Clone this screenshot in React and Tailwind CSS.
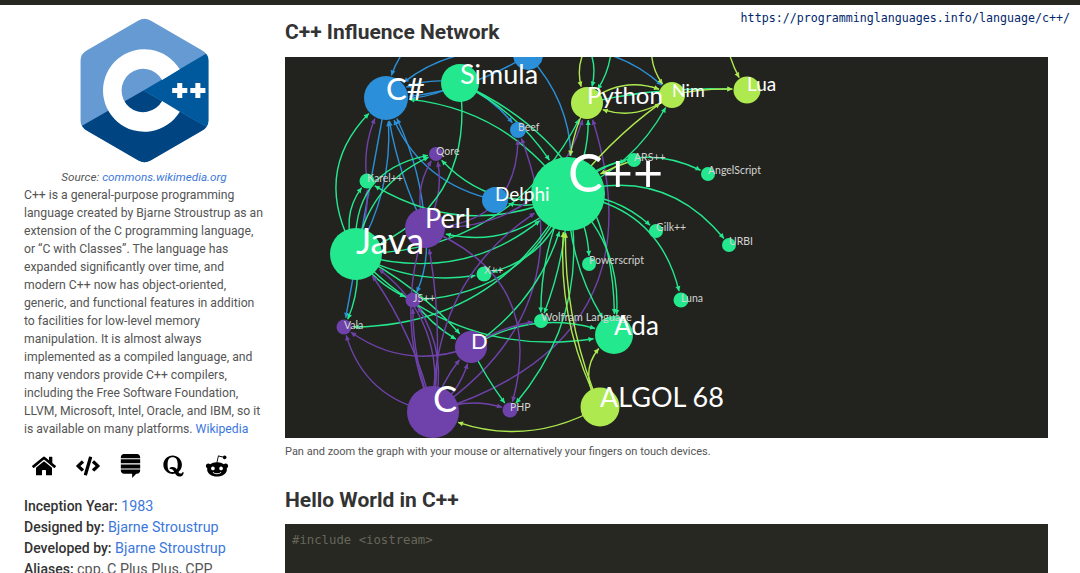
import { FaHome, FaCode, FaStackExchange, FaQuora, FaRedditAlien } from 'react-icons/fa';

const BLUE = '#2b90d9';
const GREEN = '#24e88e';
const PURPLE = '#6f42ab';
const LIME = '#aeea4f';

// graph nodes, page coordinates: x, y, radius, colour, label size
const nodes = {
  csharp: { x: 386, y: 98, r: 22, c: BLUE, label: 'C#', size: 31, ly: 100 },
  simula: { x: 460, y: 83, r: 19, c: GREEN, label: 'Simula', size: 27, ly: 84 },
  topBlue: { x: 528, y: 55, r: 15, c: BLUE },
  python: { x: 587, y: 103, r: 16, c: LIME, label: 'Python', size: 24, ly: 104 },
  nim: { x: 672, y: 95, r: 13, c: LIME, label: 'Nim', size: 18, ly: 97 },
  lua: { x: 747, y: 90, r: 13.5, c: LIME, label: 'Lua', size: 19, ly: 91 },
  beef: { x: 518, y: 130, r: 8, c: BLUE, label: 'Beef', size: 10.5, ly: 131, dim: true },
  qore: { x: 436, y: 154, r: 7, c: PURPLE, label: 'Qore', size: 10.5, ly: 155, dim: true },
  karel: { x: 367, y: 181, r: 7.5, c: GREEN, label: 'Karel++', size: 10.5, ly: 182, dim: true },
  cpp: { x: 568, y: 194, r: 37, c: GREEN, label: 'C++', size: 52, ly: 192 },
  ars: { x: 634, y: 160, r: 7, c: GREEN, label: 'ARS++', size: 10.5, ly: 161, dim: true },
  angel: { x: 708, y: 174, r: 7, c: GREEN, label: 'AngelScript', size: 10.5, ly: 174, dim: true },
  delphi: { x: 495, y: 200, r: 13, c: BLUE, label: 'Delphi', size: 19, ly: 201 },
  perl: { x: 425, y: 228, r: 20, c: PURPLE, label: 'Perl', size: 27, ly: 228 },
  gilk: { x: 656, y: 231, r: 7, c: GREEN, label: 'Gilk++', size: 10.5, ly: 231, dim: true },
  urbi: { x: 729, y: 245, r: 7, c: GREEN, label: 'URBI', size: 10.5, ly: 245, dim: true },
  java: { x: 356, y: 254, r: 26, c: GREEN, label: 'Java', size: 36, ly: 254 },
  xpp: { x: 484, y: 274, r: 7.5, c: GREEN, label: 'X++', size: 10.5, ly: 274, dim: true },
  power: { x: 589, y: 264, r: 7, c: GREEN, label: 'Powerscript', size: 10.5, ly: 264, dim: true },
  js: { x: 413, y: 300, r: 7.5, c: PURPLE, label: 'JS++', size: 10.5, ly: 302, dim: true },
  luna: { x: 681, y: 300, r: 7.5, c: GREEN, label: 'Luna', size: 10.5, ly: 302, dim: true },
  vala: { x: 344, y: 327, r: 7.5, c: PURPLE, label: 'Vala', size: 10.5, ly: 329, dim: true },
  wolfram: { x: 541, y: 321, r: 7, c: GREEN, label: 'Wolfram Language', size: 11, ly: 321, dim: true },
  ada: { x: 614, y: 335, r: 19, c: GREEN, label: 'Ada', size: 26, ly: 335 },
  d: { x: 471, y: 347, r: 16, c: PURPLE, label: 'D', size: 22, ly: 349 },
  php: { x: 510, y: 410, r: 7.5, c: PURPLE, label: 'PHP', size: 10.5, ly: 411, dim: true },
  c: { x: 433, y: 412, r: 26, c: PURPLE, label: 'C', size: 36, ly: 412 },
  algol: { x: 600, y: 407, r: 19.5, c: LIME, label: 'ALGOL 68', size: 27, ly: 407 },
  offA: { x: 440, y: 20, r: 1 },
  offB: { x: 545, y: 20, r: 1 },
  offC: { x: 610, y: 25, r: 1 },
  offD: { x: 660, y: 20, r: 1 },
  offE: { x: 725, y: 20, r: 1 },
};

// from, to, colour, bend in px
const edges = [
  ['topBlue', 'csharp', BLUE, -10], ['simula', 'csharp', BLUE, -6], ['simula', 'csharp', BLUE, 8],
  ['offA', 'csharp', BLUE, 12], ['topBlue', 'csharp', BLUE, 20], ['java', 'csharp', BLUE, 14],
  ['perl', 'csharp', BLUE, -6], ['perl', 'csharp', BLUE, 8], ['delphi', 'csharp', BLUE, -22],
  ['java', 'csharp', GREEN, -34], ['karel', 'csharp', PURPLE, -8], ['cpp', 'csharp', GREEN, 26],
  ['simula', 'beef', BLUE, -5], ['topBlue', 'cpp', BLUE, -18], ['topBlue', 'nim', BLUE, -22],
  ['perl', 'js', BLUE, -6], ['csharp', 'vala', BLUE, 0], ['java', 'karel', GREEN, -12],
  ['java', 'karel', PURPLE, 4], ['java', 'qore', GREEN, -18], ['java', 'qore', GREEN, -30],
  ['perl', 'qore', PURPLE, -10], ['perl', 'qore', PURPLE, 8], ['cpp', 'qore', GREEN, -22],
  ['cpp', 'karel', GREEN, -28], ['simula', 'java', GREEN, -40], ['cpp', 'perl', GREEN, -24],
  ['cpp', 'delphi', GREEN, -8], ['java', 'cpp', GREEN, 34],
  ['java', 'python', GREEN, 44], ['perl', 'python', PURPLE, 42], ['c', 'python', PURPLE, 90],
  ['c', 'beef', PURPLE, 60], ['simula', 'cpp', GREEN, -14], ['simula', 'ada', GREEN, -50],
  ['python', 'cpp', LIME, 6], ['cpp', 'python', GREEN, 8],
  ['cpp', 'nim', GREEN, 14], ['cpp', 'nim', LIME, -6],
  ['python', 'nim', LIME, -14], ['nim', 'python', LIME, -14], ['python', 'lua', GREEN, -6],
  ['nim', 'lua', LIME, -3], ['offC', 'python', LIME, 18], ['offC', 'python', GREEN, -10],
  ['offE', 'lua', LIME, 6], ['offD', 'nim', LIME, 14], ['offB', 'python', GREEN, -26],
  ['cpp', 'ars', GREEN, -8], ['cpp', 'angel', GREEN, -26], ['cpp', 'gilk', GREEN, -10],
  ['cpp', 'urbi', GREEN, -30], ['cpp', 'luna', GREEN, -28], ['cpp', 'power', GREEN, -6],
  ['cpp', 'ada', GREEN, -20], ['cpp', 'ada', GREEN, 12], ['cpp', 'wolfram', GREEN, -6],
  ['cpp', 'wolfram', GREEN, 8], ['ars', 'cpp', LIME, 3], ['cpp', 'xpp', GREEN, -18],
  ['java', 'xpp', GREEN, 12], ['java', 'js', GREEN, 6], ['java', 'd', GREEN, -8],
  ['java', 'ada', GREEN, 38], ['cpp', 'vala', GREEN, -40],
  ['cpp', 'js', GREEN, -30], ['js', 'd', GREEN, 5], ['d', 'cpp', GREEN, 20],
  ['d', 'php', GREEN, 2], ['cpp', 'php', GREEN, -28], ['d', 'ada', GREEN, -18],
  ['java', 'vala', GREEN, -6], ['algol', 'ada', LIME, -18], ['algol', 'cpp', LIME, -18],
  ['algol', 'cpp', LIME, -14], ['algol', 'c', LIME, -22], ['c', 'java', PURPLE, 30],
  ['c', 'js', PURPLE, -6], ['c', 'js', PURPLE, 14], ['c', 'vala', PURPLE, -20],
  ['c', 'd', PURPLE, -5], ['c', 'd', PURPLE, 8], ['c', 'php', PURPLE, -8],
  ['c', 'perl', PURPLE, 8], ['c', 'perl', PURPLE, -18], ['c', 'java', PURPLE, 10],
  ['d', 'vala', PURPLE, -18], ['d', 'wolfram', PURPLE, -5], ['perl', 'php', PURPLE, -46],
  ['c', 'cpp', PURPLE, -40], ['perl', 'beef', PURPLE, 34],
];

function Edge({ edge }) {
  const [from, to, color, bend] = edge;
  const a = nodes[from];
  const b = nodes[to];
  const dx = b.x - a.x;
  const dy = b.y - a.y;
  const len = Math.hypot(dx, dy);
  const cx = (a.x + b.x) / 2 - (dy / len) * bend * 2;
  const cy = (a.y + b.y) / 2 + (dx / len) * bend * 2;
  const at = (t) => ({
    x: (1 - t) * (1 - t) * a.x + 2 * t * (1 - t) * cx + t * t * b.x,
    y: (1 - t) * (1 - t) * a.y + 2 * t * (1 - t) * cy + t * t * b.y,
  });
  // walk back from the target until the curve leaves its circle
  let t = 1;
  while (t > 0 && Math.hypot(at(t).x - b.x, at(t).y - b.y) < b.r + 1) t -= 0.004;
  const end = at(t);
  const ex = (1 - t) * a.x + t * cx;
  const ey = (1 - t) * a.y + t * cy;
  const fx = (1 - t) * cx + t * b.x;
  const fy = (1 - t) * cy + t * b.y;
  const ang = (Math.atan2(fy - ey, fx - ex) * 180) / Math.PI;
  return (
    <g>
      <path d={`M${a.x} ${a.y}Q${ex} ${ey} ${end.x} ${end.y}`} fill="none" stroke={color} strokeWidth="1.4" />
      <polygon
        points="0,0 -5,-2.500 -5,2.500"
        fill={color}
        transform={`translate(${end.x} ${end.y}) rotate(${ang})`}
      />
    </g>
  );
}

function Graph() {
  return (
    <svg viewBox="285 57 763 381" className="block w-[763px] h-[381px] bg-[#22231e]">
      {edges.map((edge, i) => (
        <Edge key={i} edge={edge} />
      ))}
      {Object.entries(nodes)
        .filter(([, n]) => n.c)
        .map(([id, n]) => (
          <circle key={id} cx={n.x} cy={n.y} r={n.r} fill={n.c} />
        ))}
      {Object.entries(nodes)
        .filter(([, n]) => n.label)
        .map(([id, n]) => (
          <text
            key={id}
            x={n.x}
            y={n.ly}
            fontSize={n.size}
            fill={n.dim ? '#d4d4d4' : '#ffffff'}
            className="font-['Lato',sans-serif]"
          >
            {n.label}
          </text>
        ))}
    </svg>
  );
}

function CppLogo() {
  return (
    <svg viewBox="0 0 128 144" className="block w-[129px] h-[145px]">
      <path
        d="M58 2.500Q64 -1 70 2.500L121 32Q127.500 35.500 127.500 42L127.500 102Q127.500 108.500 121 112L70 141.500Q64 145 58 141.500L7 112Q0.500 108.500 0.500 102L0.500 42Q0.500 35.500 7 32Z"
        fill="#659ad2"
      />
      <path d="M2 107L63 72L125.500 108Q124 110.500 121 112L70 141.500Q64 145 58 141.500L7 112Q4 110.500 2 107Z" fill="#004482" />
      <path d="M63 72L125 35.500Q127.500 38 127.500 42L127.500 102Q127.500 105.500 125.500 108Z" fill="#00599c" />
      <path d="M99 51A41 41 0 1 0 99 93L81.500 82.500A21.500 21.500 0 1 1 81.500 61.500Z" fill="#ffffff" />
      <path d="M96.500 64.500h5v5h5v5h-5v5h-5v-5h-5v-5h5zM114.500 64.500h5v5h5v5h-5v5h-5v-5h-5v-5h5z" fill="#ffffff" />
    </svg>
  );
}

const Link = ({ children }) => <a className="text-[#3b78dc]">{children}</a>;

export default function App() {
  return (
    <div className="relative h-screen overflow-hidden bg-white font-['Roboto',sans-serif]">
      <div className="h-[5px] bg-[#272822]" />
      <div className="absolute top-[10px] right-[10px] font-['DejaVu_Sans_Mono',monospace] text-[11.65px] leading-[16px] text-[#00266b]">
        https://programminglanguages.info/language/c++/
      </div>

      <div className="flex">
        <aside className="w-[285px] shrink-0 pl-6 pr-[21px]">
          <div className="flex justify-center pt-[13px]">
            <CppLogo />
          </div>
          <p className="mt-[5px] text-center text-[11.7px] leading-[18px] italic text-[#555555]">
            Source: <Link>commons.wikimedia.org</Link>
          </p>
          <p className="text-[12.2px] leading-[18px] text-[#555555]">
            C++ is a general-purpose programming language created by Bjarne Stroustrup as an extension of the C
            programming language, or “C with Classes”. The language has expanded significantly over time, and modern
            C++ now has object-oriented, generic, and functional features in addition to facilities for low-level
            memory manipulation. It is almost always implemented as a compiled language, and many vendors provide C++
            compilers, including the Free Software Foundation, LLVM, Microsoft, Intel, Oracle, and IBM, so it is
            available on many platforms. <Link>Wikipedia</Link>
          </p>
          <div className="mt-[16px] flex items-center gap-5 pl-2 text-black">
            <FaHome className="w-[24px] h-[22px]" />
            <FaCode className="w-[24px] h-[20px]" />
            <FaStackExchange className="w-[21px] h-[24px]" />
            <FaQuora className="ml-[2px] w-[21px] h-[24px]" />
            <FaRedditAlien className="ml-[1px] w-[24px] h-[24px]" />
          </div>
          <div className="mt-[18px] text-[14.3px] leading-[21px] text-[#555555]">
            <p>
              <strong className="text-[14px] font-medium text-[#333333]">Inception Year:</strong> <Link>1983</Link>
            </p>
            <p>
              <strong className="text-[14px] font-medium text-[#333333]">Designed by:</strong> <Link>Bjarne Stroustrup</Link>
            </p>
            <p>
              <strong className="text-[14px] font-medium text-[#333333]">Developed by:</strong> <Link>Bjarne Stroustrup</Link>
            </p>
            <p>
              <strong className="text-[14px] font-medium text-[#333333]">Aliases:</strong> cpp, C Plus Plus, CPP
            </p>
          </div>
        </aside>

        <main className="w-[763px] shrink-0">
          <h2 className="pt-[12px] pb-[10px] text-[21px] leading-[30px] font-bold text-[#333333]">
            C++ Influence Network
          </h2>
          <Graph />
          <p className="mt-[6px] text-[11px] leading-[16px] text-[#555555]">
            Pan and zoom the graph with your mouse or alternatively your fingers on touch devices.
          </p>
          <h2 className="mt-[25px] text-[21px] leading-[30px] font-bold text-[#333333]">Hello World in C++</h2>
          <pre className="mt-[9px] bg-[#272822] px-[7px] py-[7px] font-['DejaVu_Sans_Mono',monospace] text-[12.3px] leading-[19px] text-[#66665a]">
            {'#include <iostream>\n\n  '}
            <span className="text-[#f92672]">l</span>
            {'              '}
            <span className="text-[#e6db74]">ll</span>
          </pre>
        </main>
      </div>
    </div>
  );
}
